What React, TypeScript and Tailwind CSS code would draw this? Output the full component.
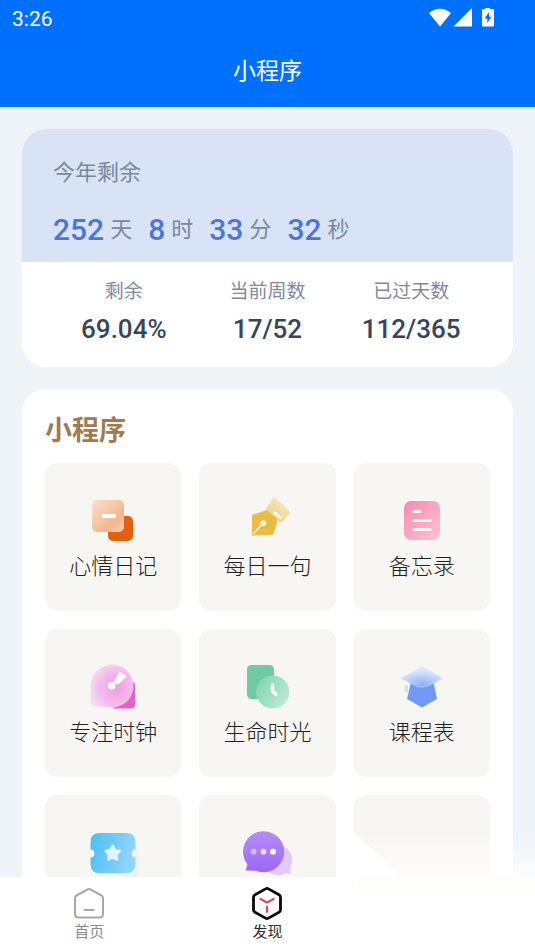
import type { ReactNode } from "react";

const art = "h-11 w-11 overflow-visible";

function DiaryIcon() {
  return (
    <svg viewBox="0 0 44 44" className={art} aria-hidden="true">
      <defs>
        <linearGradient id="diary" x1="0" y1="0" x2="1" y2="1">
          <stop offset="0" stopColor="#fbe0cd" />
          <stop offset=".5" stopColor="#f5c3a0" />
          <stop offset=".7" stopColor="#f3b68e" />
          <stop offset="1" stopColor="#f6cdb0" />
        </linearGradient>
      </defs>
      <rect x="17" y="17" width="25" height="25" rx="5" fill="#e2600f" />
      <rect x="1" y="1" width="32" height="32" rx="5" fill="url(#diary)" />
      <rect x="11" y="15" width="14" height="4" rx="1" fill="#fff" />
    </svg>
  );
}

function PenIcon() {
  return (
    <svg viewBox="0 0 44 44" className={art} aria-hidden="true">
      <defs>
        <linearGradient id="pen" x1="0.2" y1="1" x2="0.8" y2="0">
          <stop offset="0" stopColor="#e9cf7c" />
          <stop offset="1" stopColor="#f6edcf" />
        </linearGradient>
      </defs>
      <path d="M8 15.500 22 11Q24 10.500 25.500 12L31.500 18.500Q33 20 32.500 22L29 34Q28.500 36 26.500 36L7 36.500V17Q7 16 8 15.500Z" fill="#eabb45" />
      <path d="M28-1Q29.500-2.500 31-1L44 12Q45.500 13.500 44 15.500L37.500 22.500Q36 24 34.500 22.500L21.500 10.500Q20.500 9.500 22 8Z" fill="url(#pen)" />
      <path d="M30 14 35 18.500" stroke="#fff" strokeWidth="2.800" strokeLinecap="round" />
      <circle cx="18.300" cy="24.300" r="2.800" fill="#fff" />
      <path d="M18 24.500 8 35" stroke="#fdf4dc" strokeWidth="1.500" />
    </svg>
  );
}

function MemoIcon() {
  return (
    <svg viewBox="0 0 44 44" className={art} aria-hidden="true">
      <defs>
        <linearGradient id="memo" x1="0" y1="0" x2="1" y2="1">
          <stop offset="0" stopColor="#f78bb0" />
          <stop offset="1" stopColor="#fdc2d6" />
        </linearGradient>
      </defs>
      <rect x="4" y="2" width="36" height="39" rx="7" fill="url(#memo)" />
      <path d="M14 12.500H20M14 21.500H30M14 30.500H30" stroke="#fff5f8" strokeWidth="3.200" strokeLinecap="round" />
    </svg>
  );
}

function FocusIcon() {
  return (
    <svg viewBox="0 0 44 44" className={art} aria-hidden="true">
      <defs>
        <radialGradient id="focus" cx=".6" cy=".55" r=".65">
          <stop offset="0" stopColor="#ee9fe0" />
          <stop offset=".6" stopColor="#f4bcea" />
          <stop offset="1" stopColor="#f9dcf5" />
        </radialGradient>
      </defs>
      <path d="M43 17Q44 18 44 20V39Q44 43.500 39.500 43.500H22Z" fill="#e661c4" />
      <path d="M21-.5A21.500 21.500 0 1 1 21 42.500Q14 41.500 4 41.500Q-.5 41.500-.5 37V21A21.500 21.500 0 0 1 21-.5Z" fill="url(#focus)" />
      <circle cx="20.700" cy="20.700" r="3.800" fill="#fff" />
      <path d="M22.500 17.500 28.500 6.500 35.500 11.500 27 19.500Z" fill="#fff" />
    </svg>
  );
}

function LifeIcon() {
  return (
    <svg viewBox="0 0 44 44" className={art} aria-hidden="true">
      <defs>
        <linearGradient id="life" x1="0" y1=".2" x2="1" y2=".8">
          <stop offset="0" stopColor="#82d5b0" />
          <stop offset="1" stopColor="#c0ebd9" />
        </linearGradient>
      </defs>
      <rect x="2" y="0" width="27" height="34" rx="4.500" fill="#6fcca0" />
      <circle cx="27.700" cy="27" r="16.600" fill="url(#life)" />
      <path d="M27.500 20V26L31 29.500" fill="none" stroke="#fff" strokeWidth="3.400" strokeLinecap="round" strokeLinejoin="round" />
    </svg>
  );
}

function CourseIcon() {
  return (
    <svg viewBox="0 0 44 44" className={art} aria-hidden="true">
      <defs>
        <radialGradient id="course" cx=".5" cy=".85" r=".65">
          <stop offset="0" stopColor="#8fb0fb" />
          <stop offset="1" stopColor="#dce6fd" />
        </radialGradient>
      </defs>
      <rect x="4.500" y="20" width="3.500" height="7.500" rx="1.700" fill="#cfdcfb" />
      <path d="M11 17H33.500L37 34 22 42.500 7 34Z" fill="#7299f8" />
      <path d="M20.500 2Q22 1 23.500 2L42 12.500Q43 13 42 13.700L32 19.500Q22 26 12 19.500L2 13.700Q1 13 2 12.500Z" fill="url(#course)" />
    </svg>
  );
}

function TicketIcon() {
  return (
    <svg viewBox="0 0 44 44" className={art} aria-hidden="true">
      <defs>
        <linearGradient id="ticket" x1="0" y1=".4" x2="1" y2=".6">
          <stop offset="0" stopColor="#4fc0f7" />
          <stop offset="1" stopColor="#97d6f9" />
        </linearGradient>
      </defs>
      <rect x="33" y="18" width="15" height="28" rx="4" fill="#eff3f4" />
      <path d="M9 2H35Q44.500 2 44.500 11V18.500A3.900 3.900 0 0 0 44.500 26.300V33Q44.500 42.300 35 42.300H9Q-.5 42.300-.5 33V26.300A3.900 3.900 0 0 0-.5 18.500V11Q-.5 2 9 2Z" fill="url(#ticket)" />
      <path d="M21.700 14.500 24.200 19 29 20 25.700 23.700 26.300 28.800 21.700 26.700 17.100 28.800 17.700 23.700 14.400 20 19.200 19Z" fill="#e3f4fe" stroke="#e3f4fe" strokeWidth="2" strokeLinejoin="round" />
    </svg>
  );
}

function ChatIcon() {
  return (
    <svg viewBox="0 0 44 44" className={art} aria-hidden="true">
      <defs>
        <linearGradient id="chat" x1="0" y1="0" x2="0" y2="1">
          <stop offset="0" stopColor="#b78cf6" />
          <stop offset="1" stopColor="#9b68f5" />
        </linearGradient>
      </defs>
      <path d="M32 14A15 15 0 0 1 45.500 36Q45 38 46 41.500Q46 43 44.500 42.700L40.500 42Q32 47 23 41Z" fill="#dfcafa" />
      <path d="M18.700.2A20.500 20.500 0 1 1 11 39.700L2 39.500Q.5 39.500 1 38L2.500 33.500A20.500 20.500 0 0 1 18.700.2Z" fill="url(#chat)" />
      <circle cx="8.700" cy="20.700" r="2.900" fill="#d4b9fb" />
      <circle cx="18.400" cy="20.700" r="2.900" fill="#eadcfd" />
      <circle cx="28" cy="20.700" r="2.900" fill="#fff" />
    </svg>
  );
}

const countdown = [
  ["252", "天"],
  ["8", "时"],
  ["33", "分"],
  ["32", "秒"],
];

const stats = [
  ["剩余", "69.04%"],
  ["当前周数", "17/52"],
  ["已过天数", "112/365"],
];

const apps: { label: string; icon: ReactNode }[] = [
  { label: "心情日记", icon: <DiaryIcon /> },
  { label: "每日一句", icon: <PenIcon /> },
  { label: "备忘录", icon: <MemoIcon /> },
  { label: "专注时钟", icon: <FocusIcon /> },
  { label: "生命时光", icon: <LifeIcon /> },
  { label: "课程表", icon: <CourseIcon /> },
];

const tile =
  "flex h-[148px] flex-col items-center rounded-xl bg-[#f7f6f2] pt-9 font-['KaiTi','STKaiti','Kaiti_SC','AR_PL_UKai_CN','Noto_Sans_CJK_SC',serif] text-[22px] leading-8 font-light text-[#1f1f1f]";

export default function App() {
  return (
    <div className="relative flex h-screen flex-col overflow-hidden bg-[#eff4f9] font-['Roboto','Noto_Sans_CJK_SC',sans-serif]">
      <header className="shrink-0 bg-[#0070ff] text-white">
        <div className="flex h-9 items-center justify-between pr-10 pl-3">
          <span className="pt-0.5 text-[21px] leading-9">3:26</span>
          <svg width="66" height="20" viewBox="0 0 66 20" fill="#fff" aria-hidden="true">
            <path d="M0 5Q11-3.500 22 5L11 18.500Z" />
            <path d="M43 0V18.500H24.500Z" />
            <path fillRule="evenodd" d="M56-1H61V1H64Q65 1 65 2V17.500Q65 18.500 64 18.500H54Q53 18.500 53 17.500V2Q53 1 54 1H56ZM60 4 55.500 10.500H58.300V15L62.500 8.700H60Z" />
          </svg>
        </div>
        <h1 className="flex h-[71px] items-center justify-center pt-0.5 text-[23px]">小程序</h1>
      </header>

      <main className="relative min-h-0 flex-1 overflow-hidden px-[22px] pt-[22px]">
        <section className="mb-[22px] overflow-hidden rounded-3xl bg-white">
          <div className="bg-[#d9e3f6] px-[31px] pt-7 pb-3 text-[22px] text-[#78899d]">
            <h2 className="leading-8">今年剩余</h2>
            <p className="mt-[21px] flex gap-4 leading-10">
              {countdown.map(([value, unit]) => (
                <span key={unit} className="flex gap-1.5">
                  <span className="text-[30px] font-medium text-[#4c76d6]">{value}</span>
                  <span>{unit}</span>
                </span>
              ))}
            </p>
          </div>
          <dl className="grid grid-cols-3 px-[30px] pt-4 pb-[22px] text-center">
            {stats.map(([label, value]) => (
              <div key={label}>
                <dt className="text-[19px] leading-7 text-[#7e8b9d]">{label}</dt>
                <dd className="mt-[7px] text-[26px] leading-8 font-medium text-[#33475b]">{value}</dd>
              </div>
            ))}
          </dl>
        </section>

        <section className="rounded-3xl bg-white px-[23px] pt-[22px] pb-6">
          <h2 className="mb-3 text-[27px] leading-10 font-bold text-[#9c7c50]">小程序</h2>
          <div className="grid grid-cols-3 gap-[18px]">
            {apps.map(({ label, icon }) => (
              <button key={label} type="button" className={tile}>
                {icon}
                <span className="mt-[5px]">{label}</span>
              </button>
            ))}
            <button type="button" className={tile} aria-label="卡券">
              <TicketIcon />
            </button>
            <button type="button" className={tile} aria-label="聊天">
              <ChatIcon />
            </button>
            <div className={tile} />
          </div>
        </section>

        <div className="pointer-events-none absolute right-0 bottom-0 h-11 w-[181px] bg-linear-to-b from-white/0 to-white/75" />
        <div className="pointer-events-none absolute right-0 bottom-0 h-11 w-[181px] bg-white [clip-path:polygon(0_0,48px_100%,0_100%)]" />
      </main>

      <nav className="grid shrink-0 grid-cols-3 bg-white text-[15px] leading-[22px]">
        <a href="#home" className="flex flex-col items-center pt-2.5 pb-2 text-[#8a8a8a]">
          <svg width="34" height="34" viewBox="0 0 34 34" fill="none" stroke="#a9a9a9" strokeWidth="2" strokeLinecap="round" strokeLinejoin="round" aria-hidden="true">
            <path d="M15.500 2.500Q17 1.700 18.500 2.500L29.500 8.500Q31 9.300 31 11V27Q31 30.500 27.500 30.500H6.500Q3 30.500 3 27V11Q3 9.300 4.500 8.500Z" />
            <path d="M12.500 23H21.500" />
          </svg>
          首页
        </a>
        <a href="#discover" aria-current="page" className="flex flex-col items-center pt-2.5 pb-2 text-[#2b2b2b]">
          <svg width="34" height="34" viewBox="0 0 34 34" fill="none" strokeLinecap="round" strokeLinejoin="round" aria-hidden="true">
            <path d="M15.500 1.900Q17 1 18.500 1.900L29 7.800Q30.500 8.600 30.500 10.300V22.700Q30.500 24.400 29 25.200L18.500 31.100Q17 32 15.500 31.100L5 25.200Q3.500 24.400 3.500 22.700V10.300Q3.500 8.600 5 7.800Z" stroke="#0a0a0a" strokeWidth="2.800" />
            <path d="M10.500 12 17 15.500 23.500 12M17 19.500V25" stroke="#d9485b" strokeWidth="2.200" />
          </svg>
          发现
        </a>
        <div className="bg-linear-to-b from-[#fdfdfb] to-white to-40%" />
      </nav>
    </div>
  );
}
